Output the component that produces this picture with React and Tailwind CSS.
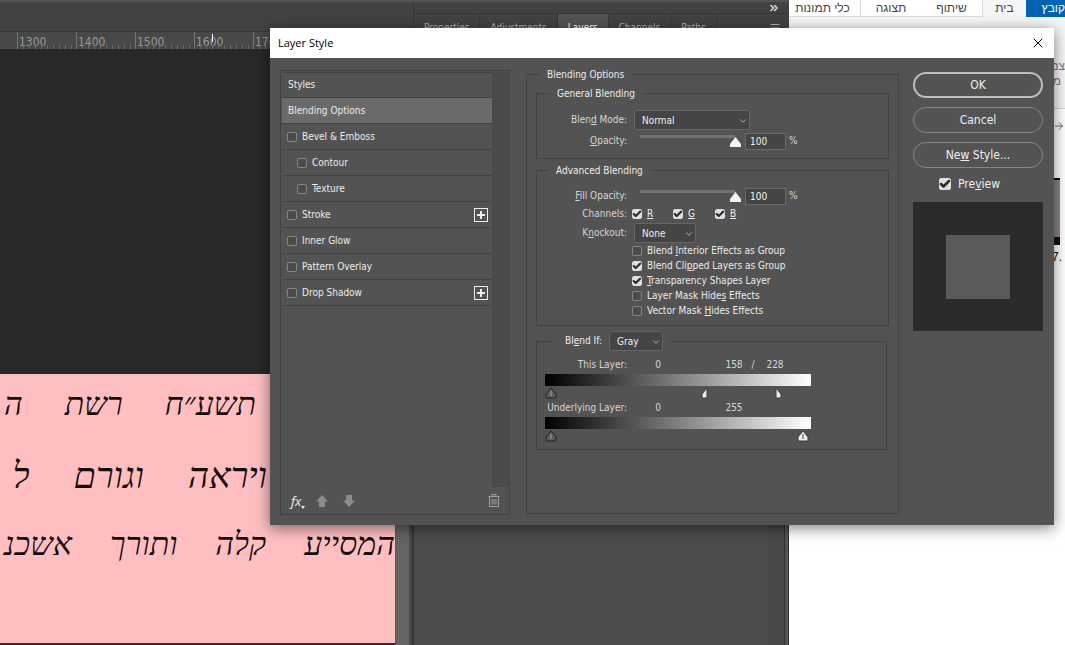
import React, { useState } from 'react';
import { Check, ChevronDown, ChevronsRight, Menu, X, ArrowRight } from 'lucide-react';

const RULER = ['1300', '1400', '1500', '1600', '1700'];

const PANEL_TABS = ['Properties', 'Adjustments', 'Layers', 'Channels', 'Paths'];

const EFFECTS = [
  { id: 'bevel', label: 'Bevel & Emboss' },
  { id: 'contour', label: 'Contour', nested: true },
  { id: 'texture', label: 'Texture', nested: true },
  { id: 'stroke', label: 'Stroke', canAdd: true },
  { id: 'glow', label: 'Inner Glow' },
  { id: 'pattern', label: 'Pattern Overlay' },
  { id: 'shadow', label: 'Drop Shadow', canAdd: true },
];

const ADVANCED = [
  { id: 'interior', label: <>Blend <u>I</u>nterior Effects as Group</>, on: false },
  { id: 'clipped', label: <>Blend Cli<u>p</u>ped Layers as Group</>, on: true },
  { id: 'transparency', label: <><u>T</u>ransparency Shapes Layer</>, on: true },
  { id: 'layermask', label: <>Layer Mask Hide<u>s</u> Effects</>, on: false },
  { id: 'vectormask', label: <>Vector Mask <u>H</u>ides Effects</>, on: false },
];

function Checkbox({ label, defaultChecked = false, large = false }) {
  return (
    <label className={`flex items-center ${large ? 'gap-[7px]' : 'gap-[5px]'}`}>
      <span className={`relative block shrink-0 ${large ? 'size-3' : 'size-[10px]'}`}>
        <input
          type="checkbox"
          defaultChecked={defaultChecked}
          className="peer block size-full appearance-none rounded-[2px] border border-[#868686] bg-[#4b4b4b] checked:border-[#dedede] checked:bg-[#dedede]"
        />
        <Check className="pointer-events-none absolute inset-0 hidden size-full text-[#2b2b2b] peer-checked:block" strokeWidth={5} />
      </span>
      <span className="whitespace-nowrap">{label}</span>
    </label>
  );
}

function Select({ id, options, className }) {
  return (
    <div className={`relative h-5 ${className}`}>
      <select id={id} className="block h-full w-full appearance-none rounded-[2px] border border-[#666] bg-[#454545] pl-[7px] pr-4 pt-px text-[10px] text-[#f0f0f0]">
        {options.map(o => <option key={o}>{o}</option>)}
      </select>
      <ChevronDown className="pointer-events-none absolute right-[2px] top-[6px] size-[10px] text-[#c8c8c8]" />
    </div>
  );
}

function OpacityRow({ id, label }) {
  const [value, setValue] = useState(100);
  return (
    <div className="flex h-[18px] items-center">
      <label htmlFor={id} className="w-[90px] text-right text-[#d6d6d6]">{label}</label>
      <input
        type="range"
        aria-label={id}
        value={value}
        onChange={e => setValue(Number(e.target.value))}
        className="ml-[13px] h-3 w-[101px] appearance-none bg-[linear-gradient(#737373,#737373)] bg-[size:95px_3px] bg-no-repeat [&::-webkit-slider-runnable-track]:h-full [&::-webkit-slider-thumb]:mt-[2px] [&::-webkit-slider-thumb]:h-[10px] [&::-webkit-slider-thumb]:w-[11px] [&::-webkit-slider-thumb]:appearance-none [&::-webkit-slider-thumb]:bg-[#f4f4f4] [&::-webkit-slider-thumb]:[clip-path:polygon(50%_0,100%_70%,100%_100%,0_100%,0_70%)]"
      />
      <input
        id={id}
        type="text"
        value={value}
        onChange={e => setValue(Number(e.target.value) || 0)}
        className="ml-1 h-[17px] w-[41px] border border-[#6a6a6a] bg-[#454545] pl-1 text-[#f0f0f0]"
      />
      <span className="ml-[3px] text-[#d6d6d6]">%</span>
    </div>
  );
}

const HANDLE_SHAPES = {
  full: 'M6 1 L11 7 V10 Q11 11 10 11 H2 Q1 11 1 10 V7 Z',
  left: 'M6 1 V11 H2 Q1 11 1 10 V7 Z',
  right: 'M6 1 V11 H10 Q11 11 11 10 V7 Z',
};

function Handle({ at, shape = 'full', dark = false }) {
  return (
    <button type="button" aria-label="Blend range handle" className="absolute top-0 -ml-[6px] size-3" style={{ left: at }}>
      <svg viewBox="0 0 12 12" className="block size-full">
        <path d={HANDLE_SHAPES[shape]} fill={dark ? '#5c5c5c' : '#ececec'} stroke={dark ? '#1e1e1e' : '#3a3a3a'} strokeWidth="1" />
        {shape === 'full' && <path d="M6 4 V9" stroke={dark ? '#8f8f8f' : '#777'} strokeWidth="1.4" />}
      </svg>
    </button>
  );
}

function BlendRange({ label, low, high, split, children }) {
  return (
    <div>
      <div className="flex h-[14px] items-center leading-4 text-[#d6d6d6]">
        <span className="w-[82px] whitespace-nowrap text-right">{label}</span>
        <span className="ml-[26px] w-[10px] text-center">{low}</span>
        <span className="ml-[59px] w-[24px] text-center">{high}</span>
        {split && (
          <>
            <span className="w-[14px] text-center">/</span>
            <span className="w-[30px] text-center">{split}</span>
          </>
        )}
      </div>
      <div className="mt-[2px] h-3 w-[266px] bg-[linear-gradient(90deg,#000,#fff)]" />
      <div className="relative mt-px h-[13px] w-[266px]">{children}</div>
    </div>
  );
}

function PlusButton({ label }) {
  return (
    <button type="button" aria-label={label} className="ml-auto mr-1">
      <svg width="14" height="14" viewBox="0 0 14 14" fill="none" stroke="#ededed">
        <rect x="0.5" y="0.5" width="13" height="13" />
        <path d="M7 3 V11 M3 7 H11" strokeWidth="2" />
      </svg>
    </button>
  );
}

function StyleList() {
  return (
    <div className="mt-[3px] flex w-[230px] shrink-0 flex-col border border-[#424242] pt-px text-[#ececec]">
      <div className="flex h-[415px] pl-px">
        <ul className="flex-1">
          <li className="flex h-[26px] items-center border-b border-t border-[#424242] pl-[6px]">Styles</li>
          <li className="flex h-[26px] items-center border-b border-[#424242] bg-[#6a6a6a] pl-[6px]">Blending Options</li>
          {EFFECTS.map(fx => (
            <li key={fx.id} className={`flex h-[26px] items-center border-b border-[#424242] ${fx.nested ? 'pl-[15px]' : 'pl-[5px]'}`}>
              <Checkbox label={fx.label} />
              {fx.canAdd && <PlusButton label={`Add ${fx.label}`} />}
            </li>
          ))}
        </ul>
        <div className="w-[17px] bg-[#4a4a4a]" />
      </div>
      <div className="flex h-[27px] items-center pl-[10px] pr-[9px] text-[#8c8c8c]">
        <button type="button" className="flex items-end font-['Open_Sans',sans-serif] text-[13px] italic leading-4 text-[#f0f0f0]">
          fx
          <svg width="4" height="3" viewBox="0 0 4 3" fill="currentColor"><path d="M0 0 H4 L2 3 Z" /></svg>
        </button>
        <button type="button" aria-label="Move up" className="ml-[11px]">
          <svg width="12" height="12" viewBox="0 0 12 12" fill="currentColor"><path d="M6 0 L12 6.5 H9 V12 H3 V6.5 H0 Z" /></svg>
        </button>
        <button type="button" aria-label="Move down" className="ml-[15px]">
          <svg width="12" height="12" viewBox="0 0 12 12" fill="currentColor"><path d="M6 12 L12 5.5 H9 V0 H3 V5.5 H0 Z" /></svg>
        </button>
        <button type="button" aria-label="Delete" className="ml-auto">
          <svg width="12" height="13" viewBox="0 0 12 13" fill="none" stroke="#a0a0a0">
            <path d="M0.5 2.5 H11.5 M4 2.5 V0.5 H8 V2.5 M1.5 2.5 V12.5 H10.5 V2.5 M4 5 V10.5 M6 5 V10.5 M8 5 V10.5" />
          </svg>
        </button>
      </div>
    </div>
  );
}

function BlendingOptions() {
  return (
    <fieldset className="mb-px ml-4 min-w-0 flex-1 border border-[#424242] pl-[9px] pr-[9px] text-[#ececec]">
      <legend className="ml-1 h-[14px] px-[7px] leading-4">Blending Options</legend>

      <fieldset className="mt-[5px] border border-[#424242] pb-2">
        <legend className="ml-[13px] h-[14px] px-[7px] leading-4">General Blending</legend>
        <div className="mt-[10px] flex items-center">
          <label htmlFor="mode" className="w-[90px] text-right text-[#d6d6d6]">Blen<u>d</u> Mode:</label>
          <Select id="mode" options={['Normal', 'Multiply', 'Screen', 'Overlay']} className="ml-[7px] w-[116px]" />
        </div>
        <div className="mt-[2px]">
          <OpacityRow id="opacity" label={<><u>O</u>pacity:</>} />
        </div>
      </fieldset>

      <fieldset className="mt-1 border border-[#424242] pb-[7px]">
        <legend className="ml-3 h-[14px] px-[7px] leading-4">Advanced Blending</legend>
        <div className="mt-[10px]">
          <OpacityRow id="fill-opacity" label={<><u>F</u>ill Opacity:</>} />
        </div>
        <div className="mt-[2px] flex h-[14px] items-center">
          <span className="w-[90px] text-right text-[#d6d6d6]">Channels:</span>
          <div className="ml-[5px] flex">
            <div className="w-[41px]"><Checkbox label={<u>R</u>} defaultChecked /></div>
            <div className="w-[42px]"><Checkbox label={<u>G</u>} defaultChecked /></div>
            <Checkbox label={<u>B</u>} defaultChecked />
          </div>
        </div>
        <div className="mt-[2px] flex items-center">
          <label htmlFor="knockout" className="w-[90px] text-right text-[#d6d6d6]">K<u>n</u>ockout:</label>
          <Select id="knockout" options={['None', 'Shallow', 'Deep']} className="ml-[7px] w-[62px]" />
        </div>
        <div className="ml-[95px]">
          {ADVANCED.map(a => (
            <div key={a.id} className="flex h-[15px] items-center">
              <Checkbox label={a.label} defaultChecked={a.on} />
            </div>
          ))}
        </div>
      </fieldset>

      <fieldset className="mr-[2px] mt-[5px] border border-[#424242] pb-[6px] pl-2">
        <legend className="ml-[7px] flex items-center pl-[13px] pr-[7px]">
          <label htmlFor="blend-if">Bl<u>e</u>nd If:</label>
          <Select id="blend-if" options={['Gray', 'Red', 'Green', 'Blue']} className="ml-[7px] w-[54px]" />
        </legend>
        <div className="mt-[7px] flex flex-col gap-px">
          <BlendRange label="This Layer:" low="0" high="158" split="228">
            <Handle at="6px" dark />
            <Handle at="61%" shape="left" />
            <Handle at="87%" shape="right" />
          </BlendRange>
          <BlendRange label="Underlying Layer:" low="0" high="255">
            <Handle at="6px" dark />
            <Handle at="97%" />
          </BlendRange>
        </div>
      </fieldset>
    </fieldset>
  );
}

function DialogActions() {
  return (
    <div className="ml-[14px] mt-[5px] flex w-[130px] shrink-0 flex-col text-[12px] text-[#f0f0f0]">
      <div className="flex flex-col gap-[9px]">
        <button type="button" className="h-[26px] rounded-full border-2 border-[#bdbdbd]">OK</button>
        <button type="button" className="h-[26px] rounded-full border border-[#858585]">Cancel</button>
        <button type="button" className="h-[26px] rounded-full border border-[#858585]">Ne<u>w</u> Style...</button>
      </div>
      <div className="ml-[26px] mt-[6px] flex h-5 items-center">
        <Checkbox label={<>Pre<u>v</u>iew</>} defaultChecked large />
      </div>
      <div className="mt-2 flex h-[129px] items-center justify-center bg-[#2b2b2b]">
        <div className="size-16 bg-[#5a5a5a]" />
      </div>
    </div>
  );
}

function LayerStyleDialog() {
  return (
    <div role="dialog" aria-label="Layer Style" className="absolute left-[270px] right-[11px] top-[28px] bg-[#535353] shadow-[0_3px_14px_rgba(0,0,0,0.5)]">
      <div className="flex h-[30px] items-center justify-between bg-white pl-2 pr-2 font-['Open_Sans',sans-serif] text-[11px] text-black">
        <h1>Layer Style</h1>
        <button type="button" aria-label="Close"><X className="size-4" strokeWidth={1.5} /></button>
      </div>
      <div className="flex pb-[10px] pl-[10px] pr-[11px] pt-[9px] text-[10px] leading-[14px]">
        <StyleList />
        <BlendingOptions />
        <DialogActions />
      </div>
    </div>
  );
}

function Canvas() {
  return (
    <div className="flex min-w-0 flex-1 flex-col">
      <div className="h-[29px] bg-[#424242]" />
      <div className="flex h-[18px] overflow-hidden border-t border-[#383838] bg-[#484848] text-[12px] leading-5 text-[#9a9a9a]">
        <div className="w-[17px] shrink-0" />
        {RULER.map(n => (
          <div key={n} className="relative w-[59px] shrink-0 border-l border-[#777] pl-px">
            {n}
            <div className="absolute inset-x-0 bottom-0 h-1 bg-[repeating-linear-gradient(90deg,transparent_0_5px,#6a6a6a_5px_6px)]" />
            {n === '1600' && <div className="absolute left-[17px] top-[2px] h-2 w-px bg-white" />}
          </div>
        ))}
      </div>
      <div className="flex flex-1">
        <div className="flex min-w-0 flex-1 flex-col">
          <div className="h-[325px] bg-[#282828]" />
          <div dir="rtl" className="flex flex-1 flex-col overflow-hidden border-b-2 border-[#3a2a2b] bg-[#ffbfc1] font-['Liberation_Serif',serif] text-[32px] italic leading-[60px] text-[#140c0d]">
            <div className="flex gap-[42px] whitespace-nowrap pr-[139px]"><span>תשע״ח</span><span>רשת</span><span>ה</span></div>
            <div className="mt-3 flex gap-11 whitespace-nowrap pr-[128px] text-[36px]"><span>ויראה</span><span>וגורם</span><span>ל</span></div>
            <div className="mt-2 flex gap-[38px] whitespace-nowrap"><span>המסייע</span><span>קלה</span><span>ותורך</span><span>אשכנ</span></div>
          </div>
        </div>
        <div className="w-[14px] border-l border-[#555] bg-[#646464]" />
        <div className="w-1 border-r border-[#333] bg-[#4a4a4a]" />
      </div>
    </div>
  );
}

function PanelDock() {
  return (
    <div className="flex w-[376px] shrink-0 flex-col border-l border-[#353535] bg-[#424242]">
      <div className="flex h-3 items-center justify-end border-b border-[#363636] pr-[9px] pt-px text-[#e0e0e0]">
        <ChevronsRight className="size-3" strokeWidth={3} />
      </div>
      <div className="flex h-[27px] items-center pr-2 text-[10px] text-[#b0b0b0]">
        {PANEL_TABS.map(t => (
          <button
            key={t}
            type="button"
            className={`h-full border-r border-[#363636] px-[10px] ${t === 'Layers' ? 'bg-[#535353] text-white' : ''}`}
          >
            {t}
          </button>
        ))}
        <Menu className="ml-auto size-3" />
      </div>
      <div className="flex flex-1 bg-[#4d4d4d]">
        <div className="flex-1" />
        <div className="w-4 bg-[#494949]" />
        <div className="w-[5px] border-l border-r border-[#333] bg-[#535353]" />
      </div>
    </div>
  );
}

function ExplorerWindow() {
  return (
    <div dir="rtl" className="flex w-[276px] shrink-0 flex-col overflow-hidden bg-white font-['Liberation_Sans',sans-serif] text-[12px] text-[#444]">
      <div className="flex h-[17px] whitespace-nowrap leading-[13px]">
        <button type="button" className="h-full w-[39px] bg-[#0063b1] text-right text-white">קובץ</button>
        <button type="button" className="h-full w-[44px] border-l border-[#dadbdc] bg-[#f5f6f7]">בית</button>
        <div className="flex flex-1 border-b border-[#dadbdc]">
          <button type="button" className="w-[61px]">שיתוף</button>
          <button type="button" className="w-[61px] border-l border-[#dadbdc]">תצוגה</button>
          <button type="button" className="flex-1 pr-1 text-center">כלי תמונות</button>
        </div>
      </div>
      <div className="flex h-[92px] flex-col border-b border-[#d5d6d8] bg-[#f5f6f7] pt-[42px] leading-[15px] text-[#777]">
        <span>צמ</span>
        <span className="pr-1">מ</span>
      </div>
      <ArrowRight className="mt-[11px] size-3 shrink-0 text-[#666]" />
      <div className="mr-[5px] mt-[46px] h-[67px] w-5 shrink-0 border-b-8 border-t-2 border-b-[#1c0a0e] border-t-black bg-[#8a8385]" />
      <span className="mr-[3px] mt-[3px] self-start text-black" dir="ltr">7.</span>
    </div>
  );
}

export default function App() {
  return (
    <div className="relative flex h-screen overflow-hidden font-['DejaVu_Sans_Condensed','DejaVu_Sans',sans-serif]">
      <div className="flex min-w-0 flex-1 flex-col">
        <div className="h-[2px] bg-[#535353]" />
        <div className="flex flex-1">
          <Canvas />
          <PanelDock />
        </div>
      </div>
      <ExplorerWindow />
      <LayerStyleDialog />
    </div>
  );
}
